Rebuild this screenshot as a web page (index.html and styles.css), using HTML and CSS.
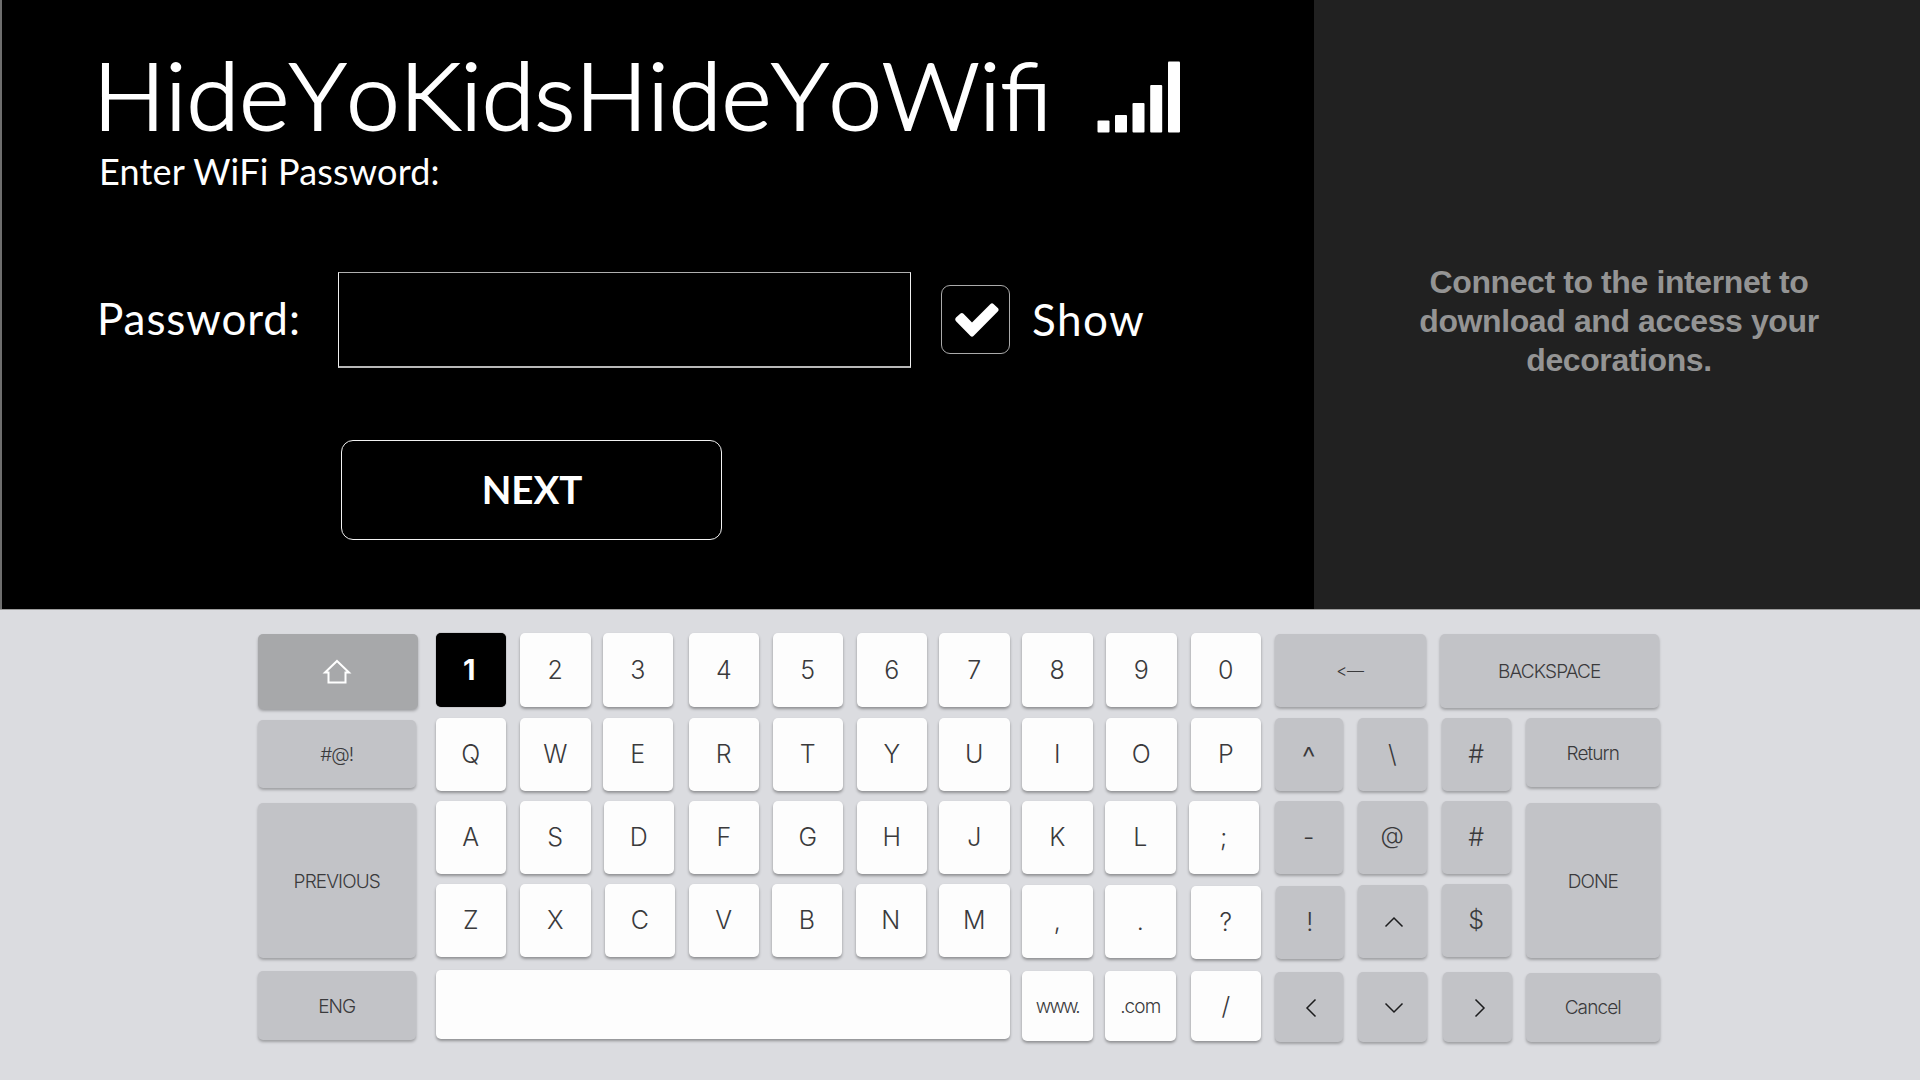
FILE: index.html
```
<!DOCTYPE html>
<html lang="en">
<head>
<meta charset="utf-8">
<title>WiFi Password</title>
<link rel="stylesheet" href="styles.css">
</head>
<body>
<main class="screen">
  <section class="top">
    <div class="panel">
      <header class="network">
        <h1 class="ssid">HideYoKidsHideYoWifi</h1>
        <svg class="signal" width="84" height="72" viewBox="0 0 84 72" fill="#fff" aria-hidden="true">
          <rect x="0.5" y="59.5" width="12" height="12" rx="1"/>
          <rect x="18" y="54" width="12" height="17.5" rx="1"/>
          <rect x="35.5" y="42" width="12" height="29.5" rx="1"/>
          <rect x="53.2" y="24" width="12" height="47.5" rx="1"/>
          <rect x="71" y="0.5" width="12" height="71" rx="1"/>
        </svg>
      </header>
      <p class="hint">Enter WiFi Password:</p>
      <div class="field">
        <label class="label" for="pw">Password:</label>
        <input class="input" id="pw" type="text">
        <span class="check">
          <svg width="44" height="34" viewBox="0 0 44 34" fill="#fff" aria-hidden="true">
            <path d="M1 14.500L5.500 10.500Q7 9.500 8.500 10.800L17 19.500L35.500 1Q37 -0.300 38.500 1L42.800 5Q44.300 6.500 43 8.200L18.500 33Q17 34.400 15.500 33L1 18.200Q-0.600 16.300 1 14.500Z"/>
          </svg>
        </span>
        <span class="show">Show</span>
      </div>
      <button class="next">NEXT</button>
    </div>
    <aside class="side"><p class="notice">Connect to the internet to download and access your decorations.</p></aside>
  </section>
  <section class="keyboard">
    <div class="key mod shift r1 c1">
      <svg width="30" height="25" viewBox="0 0 30 25" fill="none" stroke="#fff" stroke-width="2" aria-hidden="true"><path d="M15 2L27 13.500H23.500V23.500H6.500V13.500H3Z"/></svg>
    </div>
    <div class="key active r1 c2">1</div>
    <div class="key r1 c3">2</div>
    <div class="key r1 c4">3</div>
    <div class="key r1 c5">4</div>
    <div class="key r1 c6">5</div>
    <div class="key r1 c7">6</div>
    <div class="key r1 c8">7</div>
    <div class="key r1 c9">8</div>
    <div class="key r1 c10">9</div>
    <div class="key r1 c11">0</div>
    <div class="key mod word back r1 c12">&lt;—</div>
    <div class="key mod word backspace r1 c14">BACKSPACE</div>

    <div class="key mod word wide symbols r2 c1">#@!</div>
    <div class="key r2 c2">Q</div>
    <div class="key r2 c3">W</div>
    <div class="key r2 c4">E</div>
    <div class="key r2 c5">R</div>
    <div class="key r2 c6">T</div>
    <div class="key r2 c7">Y</div>
    <div class="key r2 c8">U</div>
    <div class="key r2 c9">I</div>
    <div class="key r2 c10">O</div>
    <div class="key r2 c11">P</div>
    <div class="key mod caret r2 c12">^</div>
    <div class="key mod r2 c13">\</div>
    <div class="key mod r2 c14">#</div>
    <div class="key mod word end return r2 c15">Return</div>

    <div class="key mod word wide tall r3 c1">PREVIOUS</div>
    <div class="key r3 c2">A</div>
    <div class="key r3 c3">S</div>
    <div class="key r3 c4 right1">D</div>
    <div class="key r3 c5">F</div>
    <div class="key r3 c6">G</div>
    <div class="key r3 c7">H</div>
    <div class="key r3 c8">J</div>
    <div class="key r3 c9">K</div>
    <div class="key r3 c10 left1">L</div>
    <div class="key r3 c11 left2">;</div>
    <div class="key mod r3 c12">-</div>
    <div class="key mod at r3 c13">@</div>
    <div class="key mod r3 c14">#</div>
    <div class="key mod word end tall r3 c15">DONE</div>

    <div class="key r4 c2">Z</div>
    <div class="key r4 c3">X</div>
    <div class="key r4 c4 right2">C</div>
    <div class="key r4 c5">V</div>
    <div class="key r4 c6 left1">B</div>
    <div class="key r4 c7 left1">N</div>
    <div class="key r4 c8">M</div>
    <div class="key r4 c9 down1">,</div>
    <div class="key r4 c10 left1 down1">.</div>
    <div class="key r4 c11 down2">?</div>
    <div class="key mod r4 c12 right1 down2">!</div>
    <div class="key mod r4 c13 down1"><svg width="20" height="12" viewBox="0 0 20 12" class="arrow arrow-mid"><path d="M1.500 10.500L10 2L18.500 10.500"/></svg></div>
    <div class="key mod r4 c14">$</div>

    <div class="key mod word wide low eng r5 c1">ENG</div>
    <div class="key space r5 c2"></div>
    <div class="key word low www r5 c9 down1">www.</div>
    <div class="key word low r5 c10 left1 down1">.com</div>
    <div class="key low r5 c11 down1">/</div>
    <div class="key mod low r5 c12 down2"><svg width="12" height="20" viewBox="0 0 12 20" class="arrow arrow-side"><path d="M10.500 1.500L2 10L10.500 18.500"/></svg></div>
    <div class="key mod low r5 c13 down2"><svg width="20" height="12" viewBox="0 0 20 12" class="arrow arrow-mid"><path d="M1.500 1.500L10 10L18.500 1.500"/></svg></div>
    <div class="key mod low r5 c14 right1 down2"><svg width="12" height="20" viewBox="0 0 12 20" class="arrow arrow-side"><path d="M1.500 1.500L10 10L1.500 18.500"/></svg></div>
    <div class="key mod word end low r5 c15 down3">Cancel</div>
  </section>
</main>
</body>
</html>
```
FILE: styles.css
```
* { box-sizing: border-box; margin: 0; padding: 0; }
body { width: 1920px; height: 1080px; overflow: hidden; background: #dbdce0; }
.screen { display: flex; flex-direction: column; height: 1080px; }

.top { display: flex; height: 610px; border-bottom: 1px solid #9b9b9b; }
.panel {
  width: 1314px;
  padding: 36px 0 0 96px;
  background: #000;
  border-left: 2px solid #6e6e6e;
  color: #fff;
  font-family: Lato, "Open Sans", sans-serif;
}
.network { display: flex; height: 113px; }
.ssid {
  width: 1004px;
  margin-left: -5px;
  font-size: 93.5px;
  line-height: 116px;
  font-weight: 300;
  font-kerning: none;
  white-space: nowrap;
  transform: scaleX(1.024);
  transform-origin: 0 50%;
  -webkit-text-stroke: 2px #fff;
}
.signal { margin-top: 25px; }
.hint { padding-left: 1px; font-size: 36px; line-height: 44px; letter-spacing: 0.2px; }
.field { display: flex; margin-top: 79px; height: 96px; align-items: center; }
.label { width: 241px; margin: -4px 0 0 -1px; font-size: 44px; line-height: 52px; letter-spacing: 0.9px; }
.input {
  width: 573px;
  height: 96px;
  background: #000;
  color: #fff;
  border: 1px solid #f0f0f0;
  border-top-color: #b0b0b0;
  border-bottom: 2px solid #b8b8b8;
  border-radius: 0;
  outline: 0;
  font: 44px Lato, sans-serif;
}
.check {
  display: flex;
  align-items: center;
  justify-content: center;
  width: 69px;
  height: 69px;
  margin: -1px 0 0 30px;
  padding-left: 2px;
  border: 1px solid #aaa;
  border-radius: 9px;
}
.show { margin: -3px 0 0 22px; font-size: 44px; line-height: 52px; letter-spacing: 1.5px; }
.next {
  display: block;
  width: 381px;
  height: 100px;
  margin: 72px 0 0 243px;
  padding: 0 0 3px 1px;
  background: #000;
  color: #fff;
  border: 1px solid #f2f2f2;
  border-radius: 12px;
  font: 700 38.5px Lato, sans-serif;
}
.side { flex: 1; background: #212121; }
.notice {
  width: 410px;
  margin: 263px 0 0 100px;
  text-align: center;
  font: 700 32px/39px "Liberation Sans", Arial, sans-serif;
  letter-spacing: -0.4px;
  color: #949494;
}

.keyboard {
  display: grid;
  flex: 1;
  padding: 23px 0 0 258px;
  grid-template-columns: 177.500px 84.500px 82.500px 86px 84px 84px 82.500px 83px 84px 84.500px 84px 83.500px 84px 83.500px 135px;
  grid-template-rows: 84.500px 83px 83px 86.500px 73px;
  align-items: start;
  align-content: start;
}
.key {
  display: flex;
  align-items: center;
  justify-content: center;
  width: 70.500px;
  height: 73.500px;
  border-radius: 5px;
  background: #fdfdfd;
  box-shadow: 0 2px 3px rgba(0, 0, 0, 0.35);
  font: 300 25px Inter, "Liberation Sans", sans-serif;
  font-feature-settings: "calt" 0;
  color: #3a3a3c;
}
.mod { width: 68.500px; background: #c2c3c7; box-shadow: 0 2px 3px rgba(0, 0, 0, 0.28); }
.word { padding-top: 1px; font-size: 19px; letter-spacing: -0.9px; }
.shift { width: 160px; height: 75px; margin-top: 0.500px; padding-right: 2px; background: #a7a8aa; }
.active { padding-right: 3px; background: #000; color: #fff; font: 700 29px Inter, "Liberation Sans", sans-serif; box-shadow: 0 0 1px #333; }
.back { width: 151px; margin-top: 0.500px; font-size: 17px; letter-spacing: -0.3px; }
.backspace { width: 218.500px; margin: 1px 0 0 -2px; }
.caret { padding-top: 6px; font-size: 31px; }
.at { padding-bottom: 3px; font-size: 24px; }
.www { letter-spacing: -1.900px; }
.wide { width: 157.500px; }
.symbols { height: 68px; margin-top: 2.500px; }
.end { width: 134.500px; }
.return { height: 69.500px; padding-top: 2px; }
.tall { height: 155px; margin-top: 2.500px; }
.low { height: 69.500px; }
.eng { margin-top: 0.500px; padding-top: 2px; }
.space { width: 574px; height: 69px; }
.left1 { margin-left: -1px; }
.left2 { margin-left: -2px; }
.right1 { margin-left: 1px; }
.right2 { margin-left: 2px; }
.down1 { margin-top: 1px; }
.down2 { margin-top: 2px; }
.down3 { margin-top: 2.500px; }
.arrow { fill: none; stroke: #1c1c1e; stroke-width: 1.500px; }
.arrow-side { margin: 2px 0 0 5px; }
.arrow-mid { margin: 2px 0 0 4px; }

.r1 { grid-row: 1; } .r2 { grid-row: 2; } .r3 { grid-row: 3; } .r4 { grid-row: 4; } .r5 { grid-row: 5; }
.tall { grid-row: 3 / span 2; }
.c1 { grid-column: 1; } .c2 { grid-column: 2; } .c3 { grid-column: 3; } .c4 { grid-column: 4; }
.c5 { grid-column: 5; } .c6 { grid-column: 6; } .c7 { grid-column: 7; } .c8 { grid-column: 8; }
.c9 { grid-column: 9; } .c10 { grid-column: 10; } .c11 { grid-column: 11; } .c12 { grid-column: 12; }
.c13 { grid-column: 13; } .c14 { grid-column: 14; } .c15 { grid-column: 15; }
```
